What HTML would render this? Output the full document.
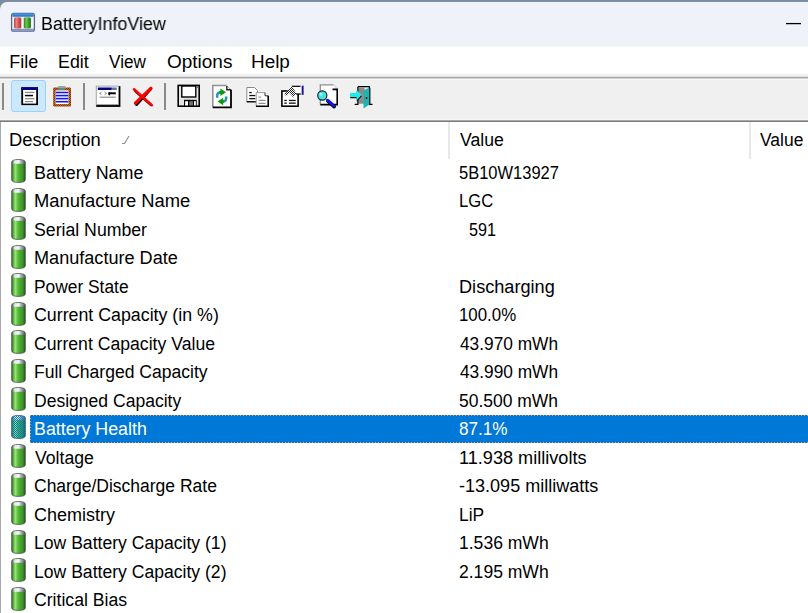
<!DOCTYPE html>
<html><head><meta charset="utf-8">
<style>
*{margin:0;padding:0;box-sizing:border-box}
html,body{width:808px;height:613px;overflow:hidden;background:#fff}
body{position:relative;font-family:"Liberation Sans",sans-serif;color:#000}
.abs{position:absolute}
#top{left:0;top:0;width:808px;height:47px;background:#7a8ea0}
#title{left:0;top:2px;width:808px;height:45px;background:linear-gradient(#f4f7fb 0 1px,#eff3f9 1px 40px,#edf1f6 40px 44px,#f4f6fa 44px);border-top-left-radius:7px}
.t{position:absolute;white-space:nowrap;font-size:18px;line-height:20px;transform-origin:0 0}
#menu{left:0;top:47px;width:808px;height:27px;background:#fff}
#ln1{left:0;top:73px;width:808px;height:8px;background:linear-gradient(#fafafa 0 1px,#f2f2f2 1px 3px,#dcdcdc 3px 4px,#ababab 4px 5px,#d0d0d0 5px 6px,#fafafa 6px 7px,#f0f0f0 7px 8px)}
#ln2{display:none}
#tb{left:0;top:81px;width:808px;height:38px;background:#f0f0f0}
#ln3{left:0;top:119px;width:808px;height:4px;background:linear-gradient(#f6f6f6 0 1px,#a8a8a8 1px 2px,#7a7a7a 2px 3px,#e8e8e8 3px 4px)}
.sep{position:absolute;top:83px;width:1.5px;height:27px;background:#8a8a8a}
#list{left:0;top:122px;width:808px;height:491px;background:#fff;border-left:1px solid #a8a8a8}
.hsep{position:absolute;top:122px;width:2px;height:36.5px;background:#e8e8e8}
.row{position:absolute;left:0;width:808px;height:28.53px}
.sel{position:absolute;left:30px;width:790px;height:28px;background:linear-gradient(90deg,#f0a050 50%,transparent 50%) 0 0/3px 1px repeat-x,linear-gradient(90deg,#f0a050 50%,transparent 50%) 0 100%/3px 1px repeat-x,linear-gradient(#f0a050 50%,transparent 50%) 0 0/1px 3px repeat-y,#0078d7}
</style></head><body>
<svg width="0" height="0" style="position:absolute">
<defs>
<linearGradient id="bg" x1="0" x2="1" y1="0" y2="0">
<stop offset="0" stop-color="#2c5e1c"/><stop offset="0.12" stop-color="#5cb040"/><stop offset="0.28" stop-color="#94e474"/><stop offset="0.45" stop-color="#5cbc3c"/><stop offset="0.6" stop-color="#48a830"/><stop offset="0.8" stop-color="#3c9826"/><stop offset="1" stop-color="#24501a"/>
</linearGradient>
<linearGradient id="cg" x1="0" x2="1" y1="0" y2="0">
<stop offset="0" stop-color="#70707a"/><stop offset="0.2" stop-color="#e8e8ee"/><stop offset="0.5" stop-color="#f4f4f8"/><stop offset="0.8" stop-color="#9a90b0"/><stop offset="1" stop-color="#606070"/>
</linearGradient>
<symbol id="bat" viewBox="0 0 15 24">
<path d="M0.7 3.2 Q0.7 0.6 7.5 0.6 Q14.3 0.6 14.3 3.2 L14.3 20.8 Q14.3 23.4 7.5 23.4 Q0.7 23.4 0.7 20.8 Z" fill="url(#bg)" stroke="#46524a" stroke-width="0.8"/>
<path d="M1.3 3.3 Q1.4 1.1 7.5 1.1 Q13.6 1.1 13.7 3.3 L13.7 4.4 Q7.5 5.2 1.3 4.4 Z" fill="url(#cg)"/>
</symbol>
<pattern id="dith" width="2" height="2" patternUnits="userSpaceOnUse"><rect width="2" height="2" fill="#0078d7"/><rect width="1" height="1" fill="#000" fill-opacity="0"/><rect x="1" y="1" width="1" height="1" fill="#000" fill-opacity="0"/></pattern>
<pattern id="dith2" width="2" height="2" patternUnits="userSpaceOnUse"><rect width="1" height="1" fill="#0078d7"/><rect x="1" y="1" width="1" height="1" fill="#0078d7"/></pattern>
<symbol id="batsel" viewBox="0 0 15 24">
<path d="M0.7 3.2 Q0.7 0.6 7.5 0.6 Q14.3 0.6 14.3 3.2 L14.3 20.8 Q14.3 23.4 7.5 23.4 Q0.7 23.4 0.7 20.8 Z" fill="url(#bg)" stroke="#46524a" stroke-width="0.8"/>
<path d="M1.3 3.3 Q1.4 1.1 7.5 1.1 Q13.6 1.1 13.7 3.3 L13.7 4.4 Q7.5 5.2 1.3 4.4 Z" fill="url(#cg)"/>
<path d="M0.5 3.2 Q0.5 0.2 7.5 0.2 Q14.5 0.2 14.5 3.2 L14.5 20.8 Q14.5 23.8 7.5 23.8 Q0.5 23.8 0.5 20.8 Z" fill="url(#dith2)"/>
</symbol>
</defs></svg>

<div id="top" class="abs"></div>
<div id="title" class="abs"></div>
<!-- app icon -->
<svg class="abs" style="left:0;top:0" width="40" height="40" viewBox="0 0 40 40">
<defs>
<linearGradient id="rg" x1="0" x2="1"><stop offset="0" stop-color="#b84848"/><stop offset="0.35" stop-color="#e88080"/><stop offset="0.6" stop-color="#d85858"/><stop offset="1" stop-color="#a83838"/></linearGradient>
<linearGradient id="gg" x1="0" x2="1"><stop offset="0" stop-color="#2e7a22"/><stop offset="0.35" stop-color="#70c850"/><stop offset="0.6" stop-color="#48a832"/><stop offset="1" stop-color="#2a6a1c"/></linearGradient>
<linearGradient id="tg" x1="0" x2="0" y1="0" y2="1"><stop offset="0" stop-color="#4a9ae8"/><stop offset="1" stop-color="#1f6fcc"/></linearGradient>
</defs>
<rect x="11.6" y="13.4" width="22.8" height="17.8" rx="2" fill="#f2f6fc" stroke="#56688a" stroke-width="1.3"/>
<rect x="12.2" y="13.6" width="21.6" height="3.2" rx="1" fill="url(#tg)"/>
<rect x="12.2" y="28.7" width="21.6" height="2.2" fill="#8696c0"/>
<path d="M14 18.6 Q14 17.3 17.6 17.3 Q21.3 17.3 21.3 18.6 L21.3 27.2 Q21.3 28.5 17.6 28.5 Q14 28.5 14 27.2Z" fill="url(#rg)"/>
<path d="M23.8 18.6 Q23.8 17.3 27.3 17.3 Q30.9 17.3 30.9 18.6 L30.9 27.2 Q30.9 28.6 27.3 28.6 Q23.8 28.6 23.8 27.2Z" fill="url(#gg)"/>
</svg>
<svg class="abs" style="left:780px;top:15px" width="28" height="16"><path d="M6 8.6 H21" stroke="#000" stroke-width="1.3"/></svg>

<div id="menu" class="abs"></div>
<div id="ln1" class="abs"></div>
<div id="ln2" class="abs"></div>
<div id="tb" class="abs"></div>
<div id="ln3" class="abs"></div>
<div class="sep" style="left:2px"></div>
<div class="sep" style="left:83px"></div>
<div class="sep" style="left:164px"></div>
<!-- pressed button -->
<div class="abs" style="left:11px;top:80px;width:35px;height:32px;background:#cce8ff;border:1px solid #99d1ff;border-radius:3px"></div>

<svg class="abs" style="left:0;top:0" width="380" height="122" viewBox="0 0 380 122">
<!-- icon1 -->
<rect x="21.3" y="87.3" width="16.7" height="17.8" fill="#000"/>
<rect x="21.3" y="87.3" width="16.7" height="2.7" fill="#000080"/>
<rect x="23.1" y="90" width="13.1" height="13.6" fill="#fff"/>
<rect x="24.9" y="91.8" width="9.7" height="1.2" fill="#888"/>
<rect x="24.9" y="94.8" width="8.1" height="1.5" fill="#000"/>
<rect x="24.9" y="98.1" width="9.7" height="1.2" fill="#888"/>
<rect x="24.9" y="101" width="8.1" height="1.2" fill="#888"/>
<!-- icon2 clipboard -->
<defs><pattern id="olr" width="2" height="2" patternUnits="userSpaceOnUse"><rect width="2" height="2" fill="#8a8a10"/><rect width="1" height="1" fill="#c01010"/><rect x="1" y="1" width="1" height="1" fill="#c01010"/></pattern></defs>
<rect x="53.2" y="87.4" width="17.8" height="19" rx="1" fill="url(#olr)"/>
<rect x="55.6" y="90.3" width="13" height="13.8" fill="#fff"/>
<rect x="58.2" y="86" width="7.1" height="2.5" fill="#a0a0a0"/>
<rect x="59" y="88.3" width="5.6" height="1.8" fill="#30a090"/>
<rect x="55.9" y="91.7" width="12.5" height="1.6" fill="#1414f0"/>
<rect x="55.9" y="94.8" width="12.5" height="1.6" fill="#1414f0"/>
<rect x="55.9" y="97.8" width="12.5" height="1.6" fill="#1414f0"/>
<rect x="55.9" y="100.9" width="12.5" height="1.6" fill="#1414f0"/>
<!-- icon3 window -->
<rect x="96.2" y="86.1" width="24.2" height="20.8" fill="#000"/>
<rect x="96.2" y="86.1" width="22.2" height="18.6" fill="#fff" stroke="#a0a0a0" stroke-width="0.8"/>
<rect x="97.8" y="87.5" width="14" height="2.5" fill="#000080"/>
<path d="M111.8 87.5 h5 v2.5 h-5z" fill="#6070b8"/>
<path d="M99.5 93.4 l2 -1.3 m-2 1.3 l2 1.3 M106.5 93.4 l-2 -1.3 m2 1.3 l-2 1.3" stroke="#909090" stroke-width="1"/>
<rect x="108.5" y="92.3" width="7.3" height="2" fill="#000"/>
<rect x="108.5" y="92.3" width="1.6" height="3" fill="#000"/>
<rect x="99.6" y="96.6" width="16.2" height="1.2" fill="#909090"/>
<!-- icon4 X -->
<path d="M135.5 91.5 L150.5 104.8" stroke="#000" stroke-width="2.2" stroke-linecap="round"/>
<path d="M150.5 89 L136.5 104.3" stroke="#000" stroke-width="3.2" stroke-linecap="round"/>
<path d="M134 89.3 L151.8 105.2" stroke="#ff0000" stroke-width="2.6" stroke-linecap="round"/>
<path d="M151 88.3 L135.4 103.2" stroke="#ff0000" stroke-width="3.2" stroke-linecap="round"/>
<!-- icon5 floppy -->
<rect x="178.2" y="85.4" width="21" height="20.8" fill="#e4e4e4" stroke="#000" stroke-width="1.6"/>
<rect x="181.8" y="86" width="14" height="11" fill="#fff" stroke="#000" stroke-width="1.4"/>
<rect x="184" y="99.8" width="12.7" height="6.4" fill="#000"/>
<rect x="185.1" y="101.2" width="2.9" height="4.3" fill="#fff"/>
<rect x="189.2" y="101.2" width="3.8" height="4.3" fill="#707070"/>
<rect x="194" y="101.2" width="1.8" height="4.3" fill="#fff"/>
<rect x="196.8" y="86.2" width="1.6" height="1.8" fill="#777"/>
<!-- icon6 refresh doc -->
<path d="M212.8 85.4 H226.5 L231 90 V107.5 H212.8Z" fill="#fff"/>
<path d="M212.8 107.5 V85.4 H226.5" stroke="#909090" stroke-width="1.5" fill="none"/>
<path d="M226.5 85.4 L231 90" stroke="#b0b0b0" stroke-width="1"/>
<path d="M226.8 86 V89.8 H231" stroke="#222" stroke-width="1.4" fill="none"/>
<path d="M231 89.8 V107.4 H212.8" stroke="#000" stroke-width="1.8" fill="none"/>
<path d="M217.2 97.8 V95.5 Q217.2 92.3 221.5 92.3" stroke="#1a9aa8" stroke-width="2.4" fill="none"/>
<path d="M220.4 88.6 L226 92.3 L220.4 96Z" fill="#0a9a0a"/>
<path d="M219.5 92.3 H221.5" stroke="#0a9a0a" stroke-width="2.4"/>
<path d="M226.2 96.4 V98.6 Q226.2 101.6 222 101.6" stroke="#1a9aa8" stroke-width="2.4" fill="none"/>
<path d="M223.2 97.8 L217.6 101.6 L223.2 105.2Z" fill="#0a9a0a"/>
<path d="M222 101.6 H224" stroke="#0a9a0a" stroke-width="2.4"/>
<!-- icon7 copy -->
<path d="M246.8 87.5 H254.5 L257.5 90.5 V101.6 H246.8Z" fill="#fff" stroke="#888" stroke-width="1"/>
<path d="M246.8 101.8 H256" stroke="#000" stroke-width="1.3"/>
<rect x="249.3" y="91.9" width="2.4" height="1.3" fill="#000"/>
<rect x="249.3" y="94.9" width="6" height="1.3" fill="#111"/>
<rect x="249.3" y="98" width="6" height="1.3" fill="#111"/>
<path d="M256.2 92.6 H265 L268.2 95.8 V106.2 H256.2Z" fill="#fff"/>
<path d="M256.2 106.2 V92.6 H265" stroke="#999" stroke-width="1" fill="none"/>
<path d="M265 92.6 V95.8 H268.2" stroke="#333" stroke-width="1" fill="none"/>
<path d="M268.2 95.8 V106.3 H256" stroke="#000" stroke-width="1.6" fill="none"/>
<rect x="258.6" y="96.6" width="2.5" height="1" fill="#777"/>
<rect x="258.6" y="99.8" width="7" height="1" fill="#777"/>
<rect x="258.6" y="102.8" width="7" height="1" fill="#777"/>
<!-- icon8 properties -->
<defs><pattern id="chk" width="2" height="2" patternUnits="userSpaceOnUse"><rect width="2" height="2" fill="#fff"/><rect width="1" height="1" fill="#222"/><rect x="1" y="1" width="1" height="1" fill="#222"/></pattern></defs>
<rect x="281.9" y="91" width="16.2" height="15.2" fill="#fff" stroke="#000" stroke-width="1.6"/>
<rect x="284.3" y="99.8" width="2.5" height="1.3" fill="#111"/>
<rect x="288.9" y="99.8" width="6.8" height="1.3" fill="#111"/>
<rect x="284.3" y="102.5" width="2.5" height="1.3" fill="#111"/>
<rect x="288.9" y="102.5" width="6.8" height="1.3" fill="#111"/>
<path d="M292.1 86.1 H300.5 L302 90 L300.5 94 H296.2 Z" fill="#fff"/>
<path d="M291.8 86.3 H300.5" stroke="#000" stroke-width="1.2"/>
<path d="M296 94 H300.8" stroke="#000" stroke-width="1.2"/>
<path d="M284.3 93.9 L292.1 86.1 L296.2 93.4 L293.4 97.5 L289.3 93 L286.4 96.2 Z" fill="url(#chk)"/>
<rect x="301.7" y="85.7" width="1.9" height="9.1" fill="#1010b0"/>
<!-- icon9 find -->
<path d="M320.3 84.9 H333.5 L337.4 89 V104.6 H320.3Z" fill="#fff"/>
<path d="M320.3 104.6 V84.9 H333.5" stroke="#909090" stroke-width="1.3" fill="none"/>
<path d="M333.5 84.9 L337.4 89" stroke="#c0c0c0" stroke-width="1"/>
<path d="M332.5 89.4 H337.2 V104.6 H320.3" stroke="#000" stroke-width="1.6" fill="none"/>
<path d="M327.8 100.8 L334.2 106.6" stroke="#000" stroke-width="3.6" stroke-linecap="round"/>
<path d="M327.5 100.3 L333.8 106" stroke="#1414e6" stroke-width="2.8" stroke-linecap="round"/>
<circle cx="322.3" cy="95.5" r="4.6" fill="#44e4e4" stroke="#1a1a1a" stroke-width="1.1"/>
<circle cx="321" cy="94.3" r="1.4" fill="#a8f4f4"/>
<!-- icon10 exit -->
<path d="M357.9 86.7 H369.3 V104.3" stroke="#000" stroke-width="1.3" fill="none"/>
<rect x="358.5" y="87.3" width="6" height="16.4" fill="#8c8c8c"/>
<path d="M357.9 86.7 V104.4 H354.7" stroke="#000" stroke-width="1.3" fill="none"/>
<path d="M368.8 104.4 H372.5" stroke="#000" stroke-width="1.3"/>
<path d="M369.8 87.8 V104.6" stroke="#000" stroke-width="1.2"/><path d="M363.5 90.5 L369.3 87.5 V104.5 L363.5 108.5Z" fill="#1eb4b4"/>
<circle cx="366.5" cy="98" r="0.9" fill="#000"/>
<path d="M350 97 H356.5 V100.4 L361.5 95 L356.5 89.8 V93.1 H350Z" fill="#000" transform="translate(0.3 1.2)"/>
<path d="M350 93.1 H356.5 V89.8 L361.5 95 L356.5 100.4 V97 H350Z" fill="#18f0f0"/>
</svg>
<div id="list" class="abs"></div>
<div class="hsep" style="left:448px"></div>
<div class="hsep" style="left:748.5px"></div>
<svg class="abs" style="left:120px;top:134px" width="12" height="12"><path d="M2 9.5 L4.5 9.5 L9 2" stroke="#909090" stroke-width="1.2" fill="none"/></svg>

<div class="t" style="left:40.51px;top:14.00px;transform:scaleX(0.9927);will-change:transform">BatteryInfoView</div>
<div class="t" style="left:9.2px;top:51.50px;transform:scaleX(1.0)">File</div>
<div class="t" style="left:57.51px;top:51.50px;transform:scaleX(0.9897)">Edit</div>
<div class="t" style="left:108.6px;top:51.50px;transform:scaleX(0.9526)">View</div>
<div class="t" style="left:166.55px;top:51.50px;transform:scaleX(1.0542)">Options</div>
<div class="t" style="left:250.65px;top:51.50px;transform:scaleX(1.05)">Help</div>
<div class="t" style="left:8.98px;top:130.00px;transform:scaleX(1.0195)">Description</div>
<div class="t" style="left:459.6px;top:130.00px;transform:scaleX(0.9791)">Value</div>
<div class="t" style="left:760.0px;top:130.00px;transform:scaleX(0.9698)">Value</div>
<svg class="abs" style="left:11px;top:159.00px" width="15" height="24"><use href="#bat"/></svg>
<div class="t" style="left:33.71px;top:162.50px;transform:scaleX(0.9944)">Battery Name</div>
<div class="t" style="left:459.48px;top:162.50px;transform:scaleX(0.916)">5B10W13927</div>
<svg class="abs" style="left:11px;top:187.53px" width="15" height="24"><use href="#bat"/></svg>
<div class="t" style="left:33.68px;top:191.03px;transform:scaleX(1.0213)">Manufacture Name</div>
<div class="t" style="left:459.48px;top:191.03px;transform:scaleX(0.9235)">LGC</div>
<svg class="abs" style="left:11px;top:216.06px" width="15" height="24"><use href="#bat"/></svg>
<div class="t" style="left:33.72px;top:219.56px;transform:scaleX(0.9823)">Serial Number</div>
<div class="t" style="left:468.7px;top:219.56px;transform:scaleX(0.9)">591</div>
<svg class="abs" style="left:11px;top:244.59px" width="15" height="24"><use href="#bat"/></svg>
<div class="t" style="left:33.7px;top:248.09px;transform:scaleX(1.005)">Manufacture Date</div>
<svg class="abs" style="left:11px;top:273.12px" width="15" height="24"><use href="#bat"/></svg>
<div class="t" style="left:33.74px;top:276.62px;transform:scaleX(0.9642)">Power State</div>
<div class="t" style="left:459.39px;top:276.62px;transform:scaleX(1.0076)">Discharging</div>
<svg class="abs" style="left:11px;top:301.65px" width="15" height="24"><use href="#bat"/></svg>
<div class="t" style="left:33.71px;top:305.15px;transform:scaleX(0.988)">Current Capacity (in %)</div>
<div class="t" style="left:459.46px;top:305.15px;transform:scaleX(0.9362)">100.0%</div>
<svg class="abs" style="left:11px;top:330.18px" width="15" height="24"><use href="#bat"/></svg>
<div class="t" style="left:33.72px;top:333.68px;transform:scaleX(0.9797)">Current Capacity Value</div>
<div class="t" style="left:460.4px;top:333.68px;transform:scaleX(0.961)">43.970 mWh</div>
<svg class="abs" style="left:11px;top:358.71px" width="15" height="24"><use href="#bat"/></svg>
<div class="t" style="left:33.73px;top:362.21px;transform:scaleX(0.9744)">Full Charged Capacity</div>
<div class="t" style="left:460.4px;top:362.21px;transform:scaleX(0.961)">43.990 mWh</div>
<svg class="abs" style="left:11px;top:387.24px" width="15" height="24"><use href="#bat"/></svg>
<div class="t" style="left:33.73px;top:390.74px;transform:scaleX(0.9745)">Designed Capacity</div>
<div class="t" style="left:459.43px;top:390.74px;transform:scaleX(0.9707)">50.500 mWh</div>
<div class="sel" style="top:414.87px"></div>
<svg class="abs" style="left:11px;top:415.47px" width="15" height="24"><use href="#batsel"/></svg>
<div class="t" style="left:33.71px;top:419.27px;transform:scaleX(0.9892);color:#fff">Battery Health</div>
<div class="t" style="left:459.45px;top:419.27px;transform:scaleX(0.9521);color:#fff">87.1%</div>
<svg class="abs" style="left:11px;top:444.30px" width="15" height="24"><use href="#bat"/></svg>
<div class="t" style="left:34.7px;top:447.80px;transform:scaleX(0.981)">Voltage</div>
<div class="t" style="left:459.39px;top:447.80px;transform:scaleX(1.0065)">11.938 millivolts</div>
<svg class="abs" style="left:11px;top:472.83px" width="15" height="24"><use href="#bat"/></svg>
<div class="t" style="left:33.73px;top:476.33px;transform:scaleX(0.9724)">Charge/Discharge Rate</div>
<div class="t" style="left:459.4px;top:476.33px;transform:scaleX(1.0022)">-13.095 milliwatts</div>
<svg class="abs" style="left:11px;top:501.36px" width="15" height="24"><use href="#bat"/></svg>
<div class="t" style="left:33.7px;top:504.86px;transform:scaleX(0.9987)">Chemistry</div>
<div class="t" style="left:459.43px;top:504.86px;transform:scaleX(0.9652)">LiP</div>
<svg class="abs" style="left:11px;top:529.89px" width="15" height="24"><use href="#bat"/></svg>
<div class="t" style="left:33.72px;top:533.39px;transform:scaleX(0.9768)">Low Battery Capacity (1)</div>
<div class="t" style="left:459.43px;top:533.39px;transform:scaleX(0.9742)">1.536 mWh</div>
<svg class="abs" style="left:11px;top:558.42px" width="15" height="24"><use href="#bat"/></svg>
<div class="t" style="left:33.72px;top:561.92px;transform:scaleX(0.9768)">Low Battery Capacity (2)</div>
<div class="t" style="left:459.43px;top:561.92px;transform:scaleX(0.9742)">2.195 mWh</div>
<svg class="abs" style="left:11px;top:586.95px" width="15" height="24"><use href="#bat"/></svg>
<div class="t" style="left:33.72px;top:590.45px;transform:scaleX(0.9804)">Critical Bias</div>
</body></html>
